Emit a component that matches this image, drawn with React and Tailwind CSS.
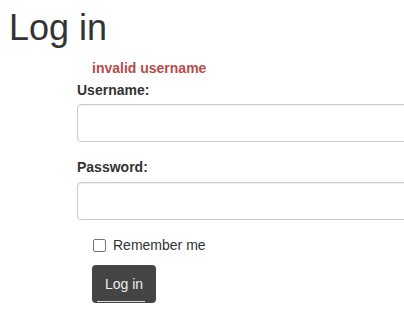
export default function App() {
  return (
    <div className="w-[404px] h-[318px] overflow-hidden bg-white text-[#333] font-['Liberation_Sans',Arial,sans-serif]">
      <h1 className="pt-[8px] pl-[9px] text-[36px] leading-[40px] font-normal">Log in</h1>

      <form className="ml-[77px] mt-[10px] w-[340px]">
        <div className="pl-[15px] text-[14px] leading-[20px] font-bold text-[#b94a48]">
          invalid username
        </div>

        <div className="mt-[2px] mb-[15px]">
          <label className="block mb-[4px] text-[14px] leading-[20px] font-bold">Username:</label>
          <input
            type="text"
            className="block w-full h-[38px] border border-[#ccc] rounded-[4px] shadow-[inset_0_1px_1px_rgba(0,0,0,0.075)] px-3 outline-none"
          />
        </div>

        <div className="mb-[15px]">
          <label className="block mb-[5px] text-[14px] leading-[20px] font-bold">Password:</label>
          <input
            type="password"
            className="block w-full h-[38px] border border-[#ccc] rounded-[4px] shadow-[inset_0_1px_1px_rgba(0,0,0,0.075)] px-3 outline-none"
          />
        </div>

        <div className="flex items-center pl-[16px] h-[20px] text-[14px] leading-[20px]">
          <span className="w-[13px] h-[13px] border border-[#767676] rounded-[2px] bg-white"></span>
          <span className="ml-[7px]">Remember me</span>
        </div>

        <div className="pl-[15px] mt-[10px]">
          <button
            type="button"
            className="relative w-[64px] h-[38px] rounded-[4px] bg-[#444] text-[#eee] text-[14px] leading-[20px]"
          >
            Log in
            <span className="absolute left-[5px] bottom-[1px] w-[48px] h-px bg-[#ddd]"></span>
          </button>
        </div>
      </form>
    </div>
  );
}
